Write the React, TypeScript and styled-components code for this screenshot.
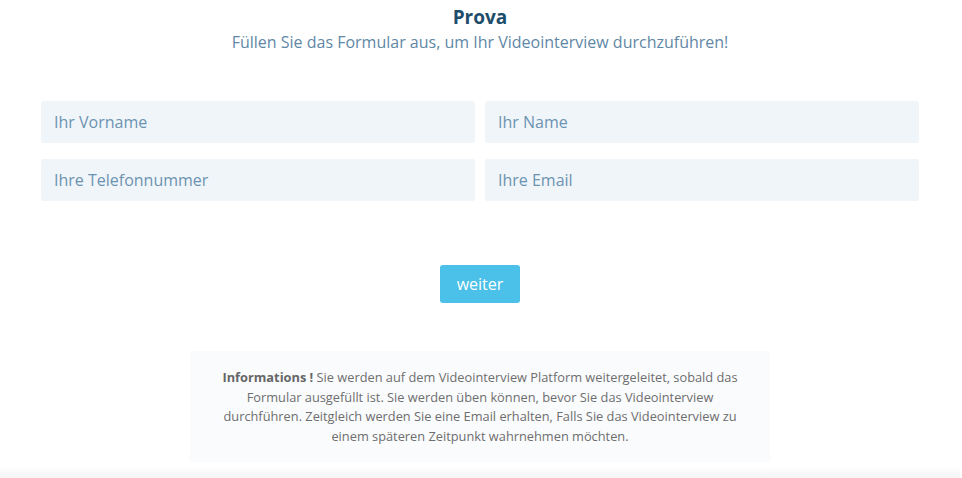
import React from 'react'
import styled, { createGlobalStyle } from 'styled-components'

const GlobalStyle = createGlobalStyle`
  html, body {
    margin: 0;
    padding: 0;
    background: #ffffff;
    font-family: "Open Sans", "Noto Sans", sans-serif;
  }
`

const fields = [
  ['Ihr Vorname', 'Ihr Name'],
  ['Ihre Telefonnummer', 'Ihre Email'],
]

const App: React.FC = () => {
  return (
    <Page>
      <GlobalStyle />
      <Header>
        <Title>Prova</Title>
        <Subtitle>Füllen Sie das Formular aus, um Ihr Videointerview durchzuführen!</Subtitle>
      </Header>
      <Form>
        {fields.flat().map((label) => (
          <Input key={label} placeholder={label} />
        ))}
      </Form>
      <Actions>
        <Button>weiter</Button>
      </Actions>
      <Info>
        <strong>Informations !</strong> Sie werden auf dem Videointerview Platform weitergeleitet, sobald das
        Formular ausgefüllt ist. Sie werden üben können, bevor Sie das Videointerview
        durchführen. Zeitgleich werden Sie eine Email erhalten, Falls Sie das Videointerview zu
        einem späteren Zeitpunkt wahrnehmen möchten.
      </Info>
      <Fade />
    </Page>
  )
}

const Page = styled.div`
  display: flex;
  flex-direction: column;
  align-items: center;
  min-height: 478px;
  box-sizing: border-box;
  padding: 4px 2px 0 0;
`

const Header = styled.div`
  display: flex;
  flex-direction: column;
  align-items: center;
`

const Title = styled.h1`
  margin: 0;
  font-size: 19px;
  line-height: 26px;
  font-weight: 700;
  color: #1d4d6b;
`

const Subtitle = styled.p`
  margin: 0;
  font-size: 16px;
  line-height: 24px;
  color: #5f88a6;
`

const Form = styled.div`
  display: grid;
  grid-template-columns: 1fr 1fr;
  column-gap: 10px;
  row-gap: 16px;
  width: 878px;
  margin-top: 47px;
`

const Input = styled.input`
  height: 42px;
  box-sizing: border-box;
  border: none;
  border-radius: 3px;
  background: #f0f5fa;
  padding: 0 13px;
  font-family: "Open Sans", "Noto Sans", sans-serif;
  font-size: 16px;
  color: #3b6a8a;
  outline: none;

  &::placeholder {
    color: #6c93b0;
  }
`

const Actions = styled.div`
  display: flex;
  justify-content: center;
  margin-top: 64px;
`

const Button = styled.button`
  width: 80px;
  height: 38px;
  border: none;
  border-radius: 3px;
  background: #4bc0e8;
  color: #ffffff;
  font-family: "Open Sans", "Noto Sans", sans-serif;
  font-size: 16px;
  cursor: pointer;
`

const Info = styled.div`
  width: 580px;
  box-sizing: border-box;
  margin-top: 48px;
  padding: 17px 26px 16px;
  background: #fafbfd;
  font-size: 12.8px;
  line-height: 19.5px;
  text-align: center;
  color: #6e6e6e;

  strong {
    color: #666666;
  }
`

const Fade = styled.div`
  width: 100%;
  height: 14px;
  margin-top: 4px;
  background: linear-gradient(to bottom, #ffffff, #f3f3f3);
`

export default App
